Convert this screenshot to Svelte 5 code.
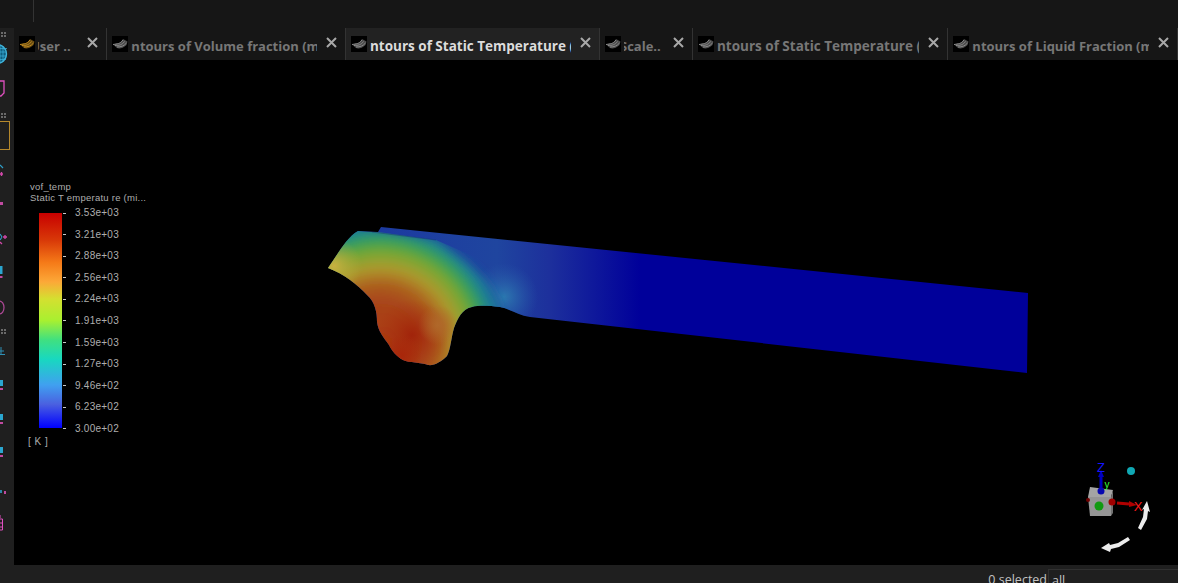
<script>
const tabs = [
  { label: 'User ..', shift: -8, width: 93, tone: 'orange' },
  { label: 'Contours of Volume fraction (mixture)', shift: -16, width: 239 },
  { label: 'Contours of Static Temperature (mixture)', shift: -17, width: 254, active: true, wide: true },
  { label: 'Scale..', shift: -4, width: 93 },
  { label: 'Contours of Static Temperature (mixture)', shift: -17, width: 255, wide: true },
  { label: 'Contours of Liquid Fraction (mixture)', shift: -16, width: 230 },
]

const scale = ['3.53e+03', '3.21e+03', '2.88e+03', '2.56e+03', '2.24e+03', '1.91e+03', '1.59e+03', '1.27e+03', '9.46e+02', '6.23e+02', '3.00e+02']

const grips = [4, 85, 301]
const shape = 'M328 268 C338 254 346 238 358 231 L378 232 L381 227 L1028 293 L1027 373 L530 317 C518 315 510 309 500 307 C490 306 480 305 472 307 C462 309 458 318 454 328 C451 338 451 348 447 356 C441 362 434 366 428 365 C420 362 410 363 403 360 C396 356 392 351 389 345 C384 338 378 331 377 322 C377 312 375 302 367 295 C358 285 344 274 328 268 Z'
</script>

<div class="app">
  <header class="topbar"><span class="divider"></span></header>

  <div class="main">
    <aside class="rail">
      <svg viewBox="0 0 14 537" width="14" height="537">
        {#each grips as y}
          <g fill="#6a6a6a">
            <rect x="1" y={y} width="2" height="2"/><rect x="4" y={y} width="2" height="2"/>
            <rect x="1" y={y + 3} width="2" height="2"/><rect x="4" y={y + 3} width="2" height="2"/>
          </g>
        {/each}
        <circle cx="-3" cy="26" r="9.500" fill="#0f5f80" stroke="#3fb4dc" stroke-width="1.400"/>
        <path d="M0 17v18M3 18v16M-4 20.500L7 20.500M-4 24L7 24M-4 28L7 28M-4 31.500L6 31.500" stroke="#3fb4dc" stroke-width=".7" fill="none"/>
        <path d="M0 53H4V65L1 68H0" fill="none" stroke="#e050c0" stroke-width="1.300"/>
        <rect x="-2" y="93.500" width="11.500" height="28" fill="none" stroke="#b5882c"/>
        <path d="M0 137L3 140" stroke="#2f9fc8" stroke-width="1.200"/>
        <path d="M0 146H3M1.500 144v4" stroke="#d048a8" stroke-width="1.400"/>
        <rect x="0" y="174" width="3" height="3" fill="#c04aa0"/>
        <path d="M0 206L2 209M0 212L2 209" stroke="#2f9fc8" stroke-width="1.200" fill="none"/>
        <path d="M3 209H7M5 207v4M0 214L2 216" stroke="#d048a8" stroke-width="1.300"/>
        <rect x="0" y="238" width="2.500" height="8" fill="#2aa6d0"/>
        <rect x="0" y="248" width="2.500" height="2" fill="#c04aa0"/>
        <path d="M0 273A4.500 6.500 0 0 1 0 286" transform="translate(-.5 0)" fill="none" stroke="#b04a98" stroke-width="1.200"/>
        <path d="M1 319V326M0 323H4M0 326.500H5" stroke="#2f8fb4" stroke-width="1"/>
        <rect x="0" y="352" width="3" height="6" fill="#2aa6d0"/>
        <rect x="0" y="360" width="3" height="2" fill="#c04aa0"/>
        <rect x="0" y="386" width="3" height="6" fill="#2aa6d0"/>
        <rect x="0" y="394" width="3" height="2" fill="#c04aa0"/>
        <rect x="0" y="419" width="3" height="6" fill="#2aa6d0"/>
        <rect x="0" y="427" width="3" height="2" fill="#c04aa0"/>
        <rect x="0" y="462" width="2" height="3" fill="#2a86a8"/>
        <rect x="4" y="463" width="2" height="3" fill="#c04aa0"/>
        <path d="M0 491H2.500V502H0M0 495H2.500M0 499H2.500M0 487V490" fill="none" stroke="#e050c0" stroke-width="1"/>
      </svg>
    </aside>

    <div class="content">
      <nav class="tabs">
        {#each tabs as tab}
          <div class="tab" class:active={tab.active} class:wide={tab.wide} style:width="{tab.width}px">
            <svg class="tab-icon" class:orange={tab.tone === 'orange'} viewBox="0 0 16 16">
              <rect width="16" height="16" fill="#000"/>
              <path d="M1 8.500C4 7 7 8 9 6L11 3L15.500 5.500L14.500 9C11 12.500 7 13 5 12Z" fill="currentColor" opacity=".55"/>
              <path d="M1 8.500C5 8 8 8 11 4M3 9.500C7 9.500 10 9 12.500 5.500M5 11C9 11 12 10 14.500 7" fill="none" stroke="currentColor" stroke-width="1"/>
            </svg>
            <div class="tab-label"><span style:margin-left="{tab.shift}px">{tab.label}</span></div>
            <svg class="tab-close" viewBox="0 0 11 11"><path d="M1 1L10 10M10 1L1 10"/></svg>
          </div>
        {/each}
      </nav>

      <section class="viewport">
        <div class="legend">
          <div class="legend-title">vof_temp</div>
          <div class="legend-title">Static T emperatu re (mi...</div>
          <div class="legend-body">
            <div class="colorbar"></div>
            <div class="ticks">
              {#each scale as value}
                <div class="tick"><i></i>{value}</div>
              {/each}
            </div>
          </div>
          <div class="legend-unit">[ K ]</div>
        </div>

        <svg class="scene" viewBox="14 60 1164 505" width="1164" height="505">
          <defs>
            <linearGradient id="plate" gradientUnits="userSpaceOnUse" x1="380" y1="0" x2="640" y2="0">
              <stop offset="0" stop-color="#1c3aa0"/>
              <stop offset=".45" stop-color="#1f459f"/>
              <stop offset=".65" stop-color="#1d309c"/>
              <stop offset="1" stop-color="#00009a"/>
            </linearGradient>
            <radialGradient id="heat" gradientUnits="userSpaceOnUse" cx="380" cy="345" r="145">
              <stop offset="0" stop-color="#ac3a0e"/>
              <stop offset=".3" stop-color="#a8441a"/>
              <stop offset=".42" stop-color="#ac601e"/>
              <stop offset=".53" stop-color="#ad9a2e"/>
              <stop offset=".64" stop-color="#76a832"/>
              <stop offset=".72" stop-color="#35a058"/>
              <stop offset=".8" stop-color="#1a7f96"/>
              <stop offset=".92" stop-color="#1c50a6"/>
              <stop offset="1" stop-color="#1c45a4" stop-opacity="0"/>
            </radialGradient>
            <radialGradient id="tip" gradientUnits="userSpaceOnUse" cx="334" cy="266" r="28">
              <stop offset="0" stop-color="#c8b040"/>
              <stop offset="1" stop-color="#b4a838" stop-opacity="0"/>
            </radialGradient>
            <radialGradient id="core" gradientUnits="userSpaceOnUse" cx="412" cy="335" r="36">
              <stop offset="0" stop-color="#a01e08" stop-opacity=".85"/>
              <stop offset="1" stop-color="#a82e0c" stop-opacity="0"/>
            </radialGradient>
            <radialGradient id="under" gradientUnits="userSpaceOnUse" cx="402" cy="355" r="20">
              <stop offset="0" stop-color="#a8260a"/>
              <stop offset="1" stop-color="#a8260a" stop-opacity="0"/>
            </radialGradient>
            <radialGradient id="patch" gradientUnits="userSpaceOnUse" cx="438" cy="325" r="20">
              <stop offset="0" stop-color="#b0682a"/>
              <stop offset="1" stop-color="#b0682a" stop-opacity="0"/>
            </radialGradient>
            <radialGradient id="spot" gradientUnits="userSpaceOnUse" cx="504" cy="297" r="34">
              <stop offset="0" stop-color="#2c78b0"/>
              <stop offset="1" stop-color="#2a5aaa" stop-opacity="0"/>
            </radialGradient>
            <filter id="soft" x="-20%" y="-20%" width="140%" height="140%"><feGaussianBlur stdDeviation="5"/></filter>
            <clipPath id="body"><path d={shape}/></clipPath>
            <clipPath id="front"><path d="M300 225L358 231L378 232L436 240L620 320V400H300Z"/></clipPath>
          </defs>

          <g clip-path="url(#body)">
            <rect x="320" y="220" width="720" height="160" fill="url(#plate)"/>
            <rect x="460" y="260" width="90" height="60" fill="url(#spot)"/>
            <g clip-path="url(#front)">
              <path d="M300 215L378 228L436 238C452 250 466 260 482 276C494 290 500 300 504 320L504 390H300Z" fill="url(#heat)" filter="url(#soft)"/>
            </g>
            <rect x="310" y="240" width="60" height="50" fill="url(#tip)"/>
            <rect x="376" y="299" width="72" height="72" fill="url(#core)"/>
            <rect x="382" y="335" width="40" height="40" fill="url(#under)"/>
            <rect x="418" y="305" width="40" height="40" fill="url(#patch)"/>
            <path d="M372 232L436 240" stroke="#14246c" stroke-width=".7" opacity=".5"/>
          </g>

          <g class="gizmo">
            <path d="M1090 487L1113 490L1111 497L1088 497Z" fill="#a4a4a4"/>
            <path d="M1088 497L1111 497L1111 516L1090 516Z" fill="#959595"/>
            <path d="M1111 497L1113 490L1113 513L1111 516Z" fill="#727272"/>
            <circle cx="1112" cy="502" r="3.500" fill="#a00000"/>
            <circle cx="1088" cy="500" r="2" fill="#700000"/>
            <circle cx="1099" cy="506" r="4.500" fill="#109a10"/>
            <circle cx="1101" cy="491" r="3.500" fill="#0808b0"/>
            <path d="M1101 488V476" stroke="#0000c0" stroke-width="3"/>
            <path d="M1101 470L1104 477H1098Z" fill="#0000c0"/>
            <text x="1101" y="472" class="axis big" fill="#1414ff">Z</text>
            <text x="1107" y="488" class="axis" fill="#3cff3c">y</text>
            <path d="M1117 503L1129 504" stroke="#b00000" stroke-width="3"/>
            <path d="M1129 501L1137 505L1129 507Z" fill="#b00000"/>
            <text x="1138" y="511" class="axis big" fill="#ff1a1a">X</text>
            <circle cx="1131" cy="471" r="4" fill="#10a8b4"/>
            <path d="M1138 528L1143 517L1144 509L1142 510L1147 501L1150 512L1148 511L1147 519L1141 530Z" fill="#ececec"/>
            <path d="M1128 537L1118 543L1110 545L1109 543L1101 548L1110 552L1111 549L1119 547L1130 540Z" fill="#ececec"/>
          </g>
        </svg>
      </section>
    </div>
  </div>

  <footer class="status">
    <span class="selected">0 selected</span>
    <div class="filter">all</div>
  </footer>
</div>

<style>
:global(body) { margin: 0; background: #1f1f1f; }
.app { width: 1178px; height: 583px; display: flex; flex-direction: column; overflow: hidden; font-family: "Open Sans", "Liberation Sans", sans-serif; }
.topbar { height: 28px; flex-shrink: 0; background: #161616; padding-left: 33px; }
.divider { display: block; width: 1px; height: 22px; background: #333; }
.main { flex: 1; display: flex; min-height: 0; }
.rail { width: 14px; flex-shrink: 0; background: #1f1f1f; overflow: hidden; }
.rail svg { display: block; overflow: hidden; }
.content { flex: 1; min-width: 0; display: flex; flex-direction: column; }
.tabs { height: 32px; flex-shrink: 0; display: flex; background: #161616; overflow: hidden; }
.tab { flex-shrink: 0; box-sizing: border-box; display: flex; align-items: center; padding-left: 5px; border-right: 1px solid #333; color: #777; font-size: 13px; font-weight: 700; }
.tab.wide { font-size: 13.500px; }
.tab.active { background: #222; color: #dcdcdc; }
.tab-icon { width: 16px; height: 16px; flex-shrink: 0; margin-right: 3px; color: #8a8a8a; }
.tab-icon.orange { color: #c08a20; }
.tab-label { flex: 1; min-width: 0; overflow: hidden; white-space: nowrap; margin-top: 4px; }
.tab-label span { display: inline-block; }
.tab-close { width: 11px; height: 11px; flex-shrink: 0; margin: -3px 8px 0 9px; fill: none; stroke: #a8a8a8; stroke-width: 2; }
.viewport { flex: 1; position: relative; background: #000; overflow: hidden; }
.scene { position: absolute; left: 0; top: 0; display: block; }
.legend { position: absolute; left: 16px; top: 121px; z-index: 1; color: #aeaeae; font-family: "Liberation Sans", sans-serif; font-size: 9.500px; letter-spacing: .25px; }
.legend-title { height: 11px; line-height: 11px; white-space: nowrap; }
.legend-body { display: flex; margin-top: 4px; margin-left: 9px; }
.colorbar { width: 23px; height: 215px; margin-top: 6px; background: linear-gradient(#c80000, #d83808 12.5%, #f57a18 23%, #fca838 32%, #d4e030 40%, #a8f030 50%, #40e080 59%, #18d8c0 68%, #40a0f0 80%, #4a60e0 89%, #0000ff); }
.ticks { height: 228px; display: flex; flex-direction: column; justify-content: space-between; font-size: 10px; }
.tick { height: 12px; line-height: 12px; display: flex; align-items: center; white-space: nowrap; }
.tick i { width: 3px; height: 1px; margin: 0 9px 0 1px; background: #c8c8c8; }
.legend-unit { margin: 1px 0 0 -2px; font-size: 10px; line-height: 12px; letter-spacing: .5px; }
.axis { font-family: "Liberation Sans", sans-serif; font-size: 10px; text-anchor: middle; }
.axis.big { font-size: 13px; }
.status { height: 18px; flex-shrink: 0; background: #1f1f1f; display: flex; justify-content: flex-end; color: #c4c4c4; font-size: 12.500px; overflow: hidden; }
.selected { margin-top: 6px; margin-right: 1px; line-height: 18px; white-space: nowrap; }
.filter { box-sizing: border-box; width: 130px; margin-top: 4px; padding: 2px 0 0 3px; height: 20px; line-height: 18px; border-left: 1px solid #303030; border-top: 1px solid #303030; }
</style>
